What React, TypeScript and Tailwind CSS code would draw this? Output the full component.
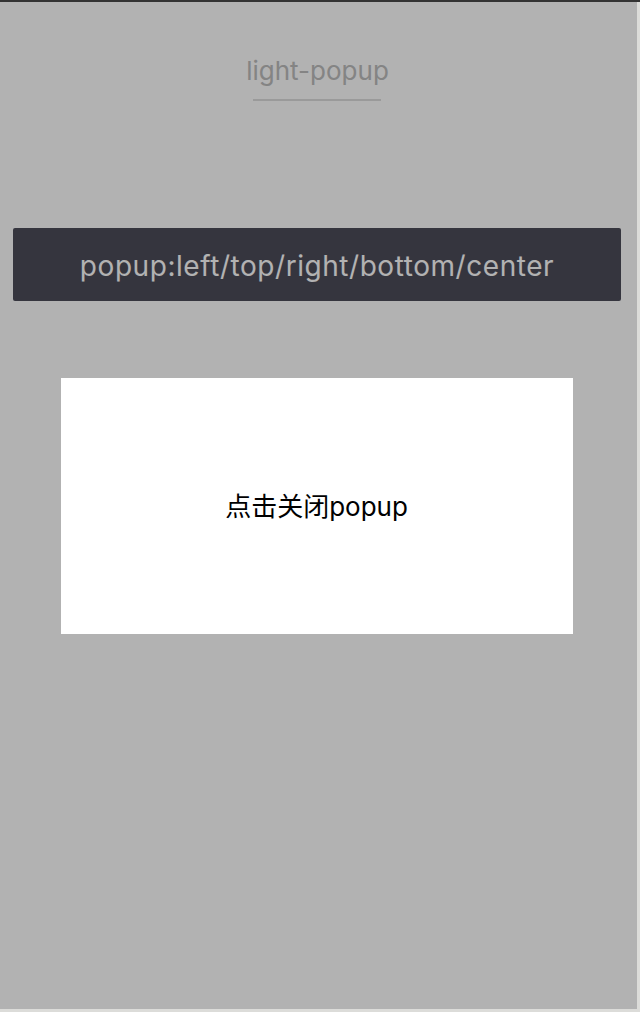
import React, { useState } from "react";

export default function App() {
  const [open, setOpen] = useState(true);

  return (
    <div
      className="w-[640px] h-[1012px] flex flex-col bg-[#dcdcd9]"
      style={{ fontFamily: 'Inter, "Noto Sans CJK SC", sans-serif' }}
    >
      {/* window frame top */}
      <div className="h-[2px] bg-[#333333]" />

      <div className="flex-1 flex">
        {/* page */}
        <div className="relative flex-1 bg-white flex flex-col items-center overflow-hidden">
          <h1 className="mt-[49px] mr-[2px] text-[26px] leading-[40px] font-normal text-[#bdbdbd]">
            light-popup
          </h1>
          <div className="mt-[8px] mr-[3px] w-[128px] h-[2px] bg-[#dddddd]" />

          <button
            className="mt-[127px] self-start ml-[13px] w-[608px] h-[73px] pt-[3px] rounded-[2px] bg-[#4c4c5a] text-white text-[28px] tracking-[0.55px]"
            onClick={() => setOpen(true)}
          >
            popup:left/top/right/bottom/center
          </button>

          {/* popup overlay */}
          {open && (
            <div className="absolute inset-0 bg-black/30 flex items-center justify-center pr-[4px] pt-[1px]">
              <div
                className="w-[512px] h-[256px] bg-white flex items-center justify-center text-[26px] text-black cursor-pointer"
                onClick={() => setOpen(false)}
              >
                点击关闭popup
              </div>
            </div>
          )}
        </div>
        {/* window frame right */}
        <div className="w-[3px]" />
      </div>

      {/* window frame bottom */}
      <div className="h-[3px]" />
    </div>
  );
}
